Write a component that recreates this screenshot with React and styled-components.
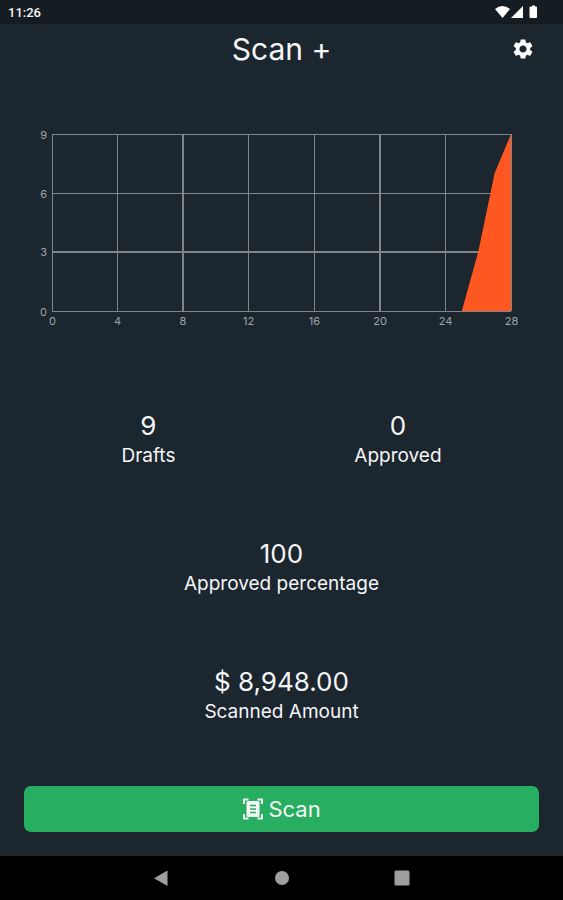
import styled, { createGlobalStyle } from "styled-components";
import { MdSettings } from "react-icons/md";

const GlobalStyles = createGlobalStyle`
  * {
    box-sizing: border-box;
  }

  body {
    margin: 0;
    background: #1c262f;
    color: #f4f5f6;
    font-family: Inter, "Open Sans", sans-serif;
  }
`;

const Screen = styled.div`
  min-height: 100vh;
  display: flex;
  flex-direction: column;
`;

const StatusBar = styled.div`
  height: 24px;
  padding: 0 24px 0 8px;
  display: flex;
  align-items: center;
  justify-content: space-between;
  background: #151c22;
  font-family: Roboto, sans-serif;
  font-size: 13px;
  font-weight: 500;
`;

const StatusIcons = styled.svg`
  width: 44px;
  height: 16px;
  fill: #ffffff;
`;

const Header = styled.header`
  height: 50px;
  padding: 0 24px;
  display: grid;
  grid-template-columns: 32px 1fr 32px;
  align-items: center;
`;

const Title = styled.h1`
  grid-column: 2;
  margin: 0;
  font-size: 30px;
  font-weight: 400;
  line-height: 40px;
  text-align: center;
`;

const IconButton = styled.button`
  height: 32px;
  padding: 0;
  display: flex;
  align-items: center;
  justify-content: center;
  border: 0;
  background: none;
  color: #ffffff;
  cursor: pointer;
`;

const Main = styled.main`
  flex: 1;
  padding: 46px 32px 24px;
  display: flex;
  flex-direction: column;
  gap: 68px;
`;

const ChartSvg = styled.svg`
  display: block;
  width: 100%;
  height: auto;
  margin-bottom: 10px;
`;

const GridLine = styled.line`
  stroke: #7e868b;
  stroke-width: ${(props) => (props.$bold ? 2 : 1)};
`;

const AxisLabel = styled.text`
  fill: #a0a5a9;
  font-size: 11px;
  text-anchor: ${(props) => props.$anchor};
`;

const StatRow = styled.section`
  display: flex;
  justify-content: space-around;
`;

const StatBox = styled.div`
  text-align: center;
`;

const StatValue = styled.div`
  font-size: 26px;
  line-height: 32px;
`;

const StatLabel = styled.div`
  font-size: 19px;
  line-height: 28px;
`;

const Footer = styled.footer`
  padding: 0 24px 24px;
`;

const ScanButton = styled.button`
  width: 100%;
  height: 46px;
  display: flex;
  align-items: center;
  justify-content: center;
  gap: 4px;
  border: 0;
  border-radius: 7px;
  background: #27ae60;
  color: #f4f5f6;
  font-family: inherit;
  font-size: 22px;
  cursor: pointer;
`;

const NavBar = styled.nav`
  height: 44px;
  display: flex;
  align-items: center;
  justify-content: center;
  gap: 96px;
  background: #000000;
`;

const NavButton = styled.button`
  width: 24px;
  height: 24px;
  padding: 0;
  border: 0;
  background: none;
  cursor: pointer;

  svg {
    display: block;
    fill: #9e9e9e;
  }
`;

const PLOT = { left: 20, right: 479, top: 14, bottom: 191 };
const MAX_X = 28;
const MAX_Y = 9;

const xTicks = [0, 4, 8, 12, 16, 20, 24, 28];
const yTicks = [0, 3, 6, 9];
const points = [
  [25, 0],
  [26, 3],
  [27, 7],
  [28, 9],
  [28, 0],
];

const toX = (x) => PLOT.left + (x / MAX_X) * (PLOT.right - PLOT.left);
const toY = (y) => PLOT.bottom - (y / MAX_Y) * (PLOT.bottom - PLOT.top);
// keeps the one pixel lines crisp
const snap = (n, bold) => (bold ? Math.round(n) : Math.floor(n) + 0.5);

function Chart() {
  return (
    <ChartSvg viewBox="0 0 499 212" role="img" aria-label="Scans per day">
      {yTicks.map((tick) => {
        const bold = tick === 3;
        const y = snap(toY(tick), bold);
        return (
          <g key={tick}>
            <GridLine x1={PLOT.left} x2={PLOT.right} y1={y} y2={y} $bold={bold} />
            <AxisLabel x={PLOT.left - 5} y={y + 4} $anchor="end">
              {tick}
            </AxisLabel>
          </g>
        );
      })}
      {xTicks.map((tick) => {
        const bold = tick === 8 || tick === 20;
        const x = snap(toX(tick), bold);
        return (
          <g key={tick}>
            <GridLine x1={x} x2={x} y1={PLOT.top} y2={PLOT.bottom} $bold={bold} />
            <AxisLabel x={x} y={PLOT.bottom + 14} $anchor="middle">
              {tick}
            </AxisLabel>
          </g>
        );
      })}
      <polygon
        fill="#ff5722"
        points={points.map(([x, y]) => `${toX(x)},${toY(y)}`).join(" ")}
      />
    </ChartSvg>
  );
}

function ScanIcon() {
  return (
    <svg width="22" height="22" viewBox="0 0 22 22" aria-hidden="true">
      <path
        d="M2 6 V1.500 H6.500 M15.500 1.500 H20 V6 M20 16 V20.500 H15.500 M6.500 20.500 H2 V16"
        fill="none"
        stroke="currentColor"
        strokeWidth="2"
      />
      <rect x="4.500" y="3" width="13" height="16" rx="1.500" fill="currentColor" />
      <path
        d="M8 7.500 H14 M8 11 H14 M8 14.500 H14"
        stroke="#27ae60"
        strokeWidth="1.500"
      />
    </svg>
  );
}

function Stat({ value, label }) {
  return (
    <StatBox>
      <StatValue>{value}</StatValue>
      <StatLabel>{label}</StatLabel>
    </StatBox>
  );
}

export default function App() {
  return (
    <Screen>
      <GlobalStyles />
      <StatusBar>
        <span>11:26</span>
        <StatusIcons viewBox="0 0 44 16" aria-hidden="true">
          <path d="M0 5 Q7.500 -1 15 5 L7.500 14 Z" />
          <path d="M28 2 V14 H16 Z" />
          <path d="M36 2.500 H37 V1.500 H40 V2.500 H41 Q42 2.500 42 3.500 V13 Q42 14 41 14 H35.500 Q34.500 14 34.500 13 V3.500 Q34.500 2.500 35.500 2.500 Z" />
        </StatusIcons>
      </StatusBar>
      <Header>
        <Title>Scan +</Title>
        <IconButton aria-label="Settings">
          <MdSettings size={24} />
        </IconButton>
      </Header>
      <Main>
        <Chart />
        <StatRow>
          <Stat value="9" label="Drafts" />
          <Stat value="0" label="Approved" />
        </StatRow>
        <StatRow>
          <Stat value="100" label="Approved percentage" />
        </StatRow>
        <StatRow>
          <Stat value="$ 8,948.00" label="Scanned Amount" />
        </StatRow>
      </Main>
      <Footer>
        <ScanButton>
          <ScanIcon />
          Scan
        </ScanButton>
      </Footer>
      <NavBar>
        <NavButton aria-label="Back">
          <svg width="24" height="24" viewBox="0 0 24 24">
            <path d="M17.500 4.500 V20 L4 12.200 Z" />
          </svg>
        </NavButton>
        <NavButton aria-label="Home">
          <svg width="24" height="24" viewBox="0 0 24 24">
            <circle cx="12" cy="12" r="7" />
          </svg>
        </NavButton>
        <NavButton aria-label="Recent apps">
          <svg width="24" height="24" viewBox="0 0 24 24">
            <rect x="4.500" y="4.500" width="15" height="15" rx="1.500" />
          </svg>
        </NavButton>
      </NavBar>
    </Screen>
  );
}
